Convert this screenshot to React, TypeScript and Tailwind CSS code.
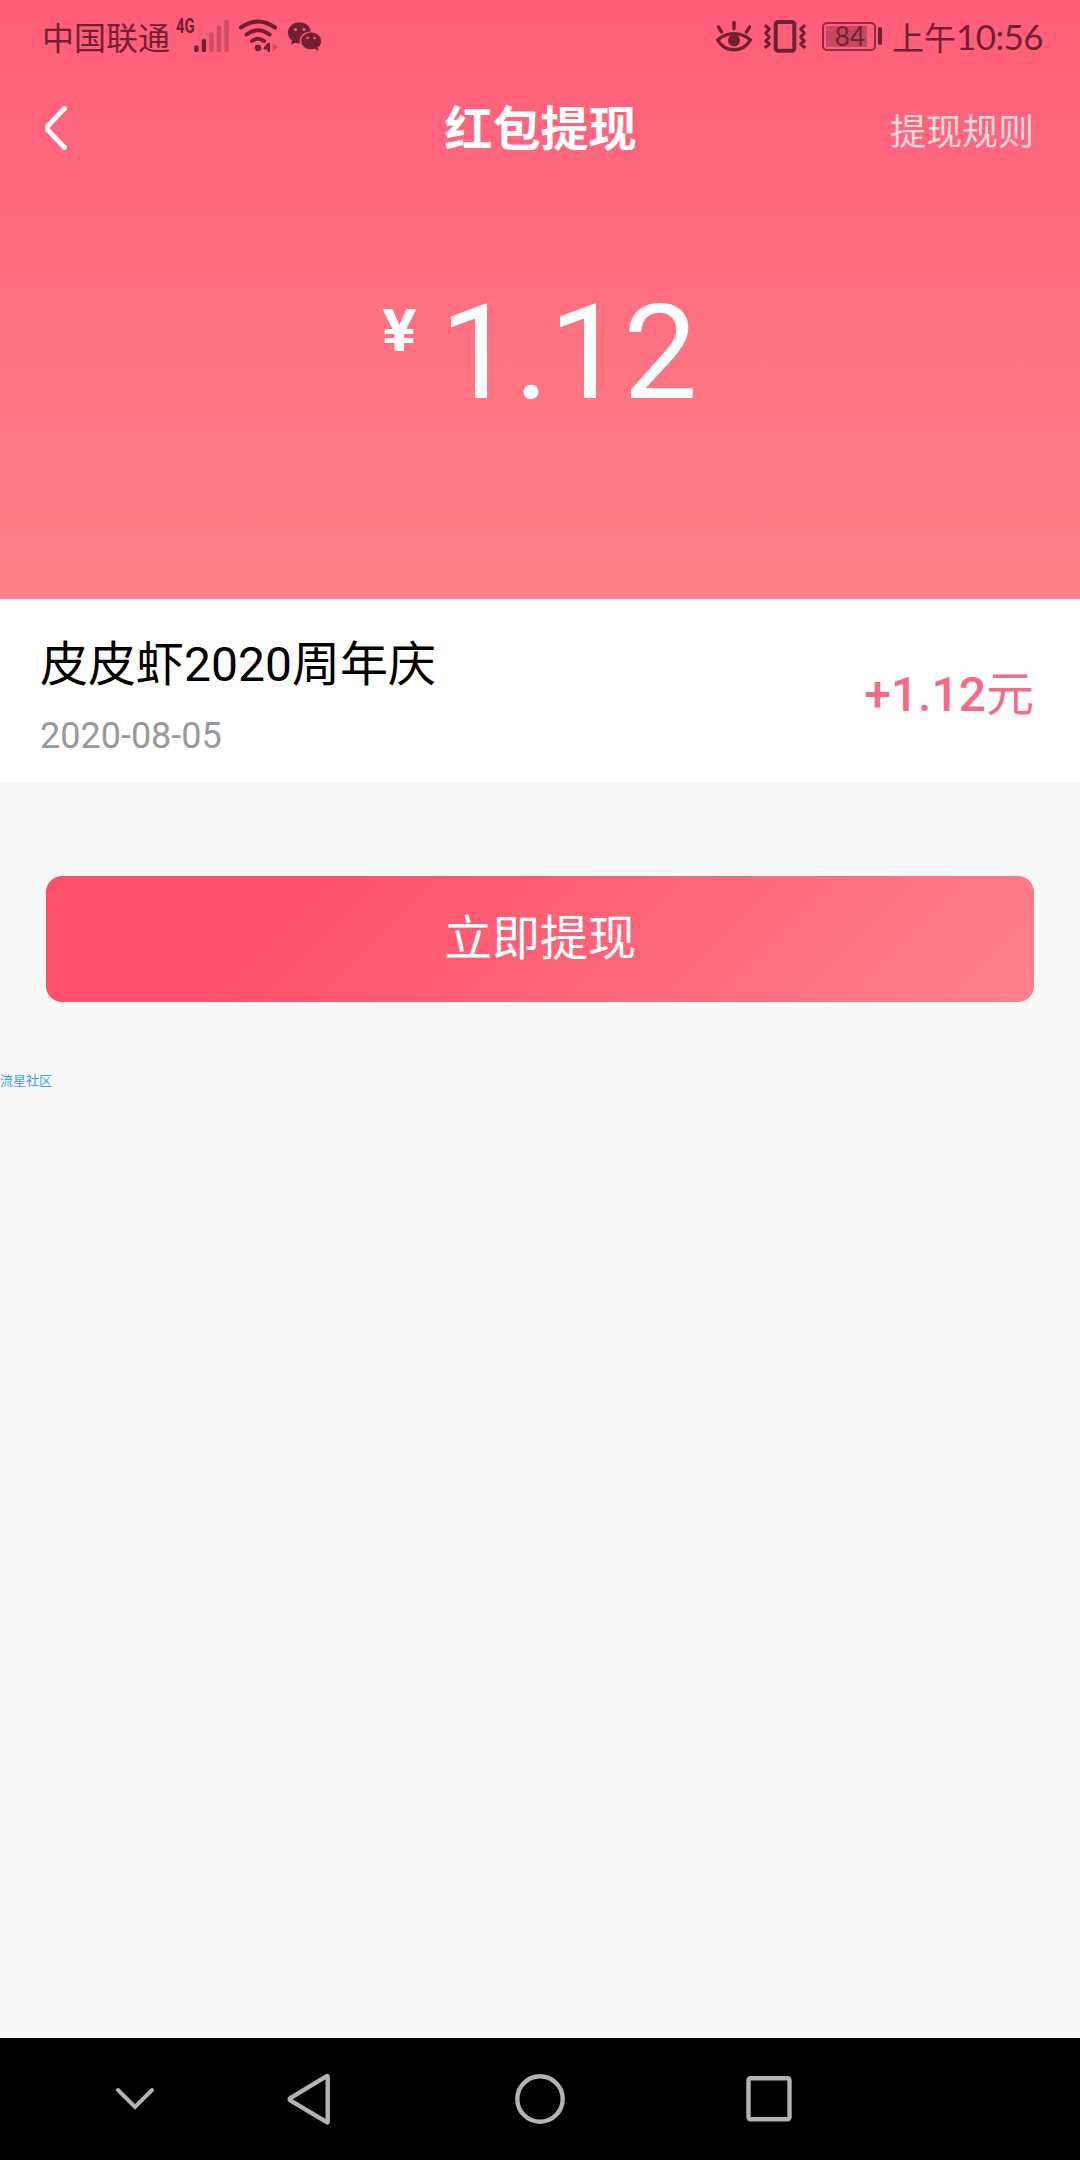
function SignalIcon() {
  return (
    <svg className="h-[34px] w-[36px] shrink-0" viewBox="194 19 36 34" stroke="#731f33" strokeWidth="4.4" strokeLinecap="round">
      <path d="M196.4 47.5v2.5M203.9 41v9" />
      <path d="M211.4 34.500v15.500M219 27.500v22.500M226.600 21.500v28.500" stroke="#d04a64" />
    </svg>
  );
}

function WifiIcon() {
  return (
    <svg className="h-[34px] w-[40px] shrink-0" viewBox="238 19 40 34" fill="none" stroke="#731f33" strokeWidth="4" strokeLinecap="round">
      <path d="M241 27.500Q258 15.500 275 27.500M246.500 34.500Q258 26 269.500 34.500M252 41Q258 36.500 264 41" />
      <circle cx="258" cy="48" r="3.300" fill="#731f33" stroke="none" />
      <path d="M270 43v9h-2.500v-2.500h-4v-1.500l4-5z" fill="#731f33" stroke="none" />
      <path d="M272.500 43.500l5.500 3.500-5.500 5z" fill="#d04a64" stroke="none" />
    </svg>
  );
}

function ChatIcon() {
  return (
    <svg className="h-[34px] w-[34px] shrink-0" viewBox="288 19 34 34" fill="#731f33">
      <path d="M299.500 22.300c-6.500 0-11.500 4.500-11.500 10.500 0 3.300 1.600 6 4 8l-1.200 4.200 4.500-2.300c1.500.5 3 .6 4.600.5-1.400-6.400 3.600-11.700 10.900-11.700-1-5.300-5.500-9.200-11.300-9.200z" />
      <path d="M311.200 32.600c-5.600 0-10 3.700-10 8.400s4.400 8.300 10 8.300c1.300 0 2.500-.2 3.600-.5l3.600 2.100-.8-3.400c2.300-1.600 3.600-3.900 3.600-6.500 0-4.700-4.400-8.400-10-8.400z" />
      <g fill="#f85f79">
        <circle cx="295.500" cy="29.500" r="1.500" />
        <circle cx="304" cy="29.500" r="1.500" />
        <circle cx="307.500" cy="38" r="1.300" />
        <circle cx="314.500" cy="38" r="1.300" />
      </g>
    </svg>
  );
}

function EyeIcon() {
  return (
    <svg className="h-[34px] w-[37px] shrink-0" viewBox="715 19 37 34" fill="none" stroke="#731f33" strokeWidth="3.4" strokeLinecap="round">
      <path d="M717.700 40C727 31.500 741 31.500 750.300 40C743 53 725 53 717.700 40Z" strokeLinejoin="round" />
      <circle cx="734" cy="40.500" r="6" fill="#731f33" stroke="none" />
      <path d="M734 22.500v6M718.500 27l3 5M749.500 27l-3 5" />
    </svg>
  );
}

function VibrateIcon() {
  return (
    <svg className="h-[34px] w-[44px] shrink-0" viewBox="763 19 44 34" fill="none" stroke="#731f33" strokeWidth="4" strokeLinecap="round" strokeLinejoin="round">
      <rect x="775.700" y="22" width="18.600" height="28.800" rx="2.500" />
      <path d="M765.800 26l3.400 3-3.400 4 3.400 4-3.400 4 3.400 3-3.400 3M804.200 26l-3.400 3 3.400 4-3.400 4 3.400 4-3.400 3 3.400 3" strokeWidth="3.2" />
    </svg>
  );
}

function Battery() {
  return (
    <div className="flex items-center">
      <div className="h-[29px] w-[54px] rounded-[5px] border-2 border-[#8f2b42] p-[2px]">
        <div className="flex h-full w-[41px] items-center justify-end bg-[#c4485f] pr-[2px] font-[Lato,sans-serif] text-[26px] leading-none text-[#731f33]">84</div>
      </div>
      <div className="ml-[2px] h-[18px] w-[4px] rounded-full bg-[#731f33]" />
    </div>
  );
}

function StatusBar() {
  return (
    <div className="flex h-[72px] items-center justify-between pl-[42px] pr-[36px] text-[#731f33]">
      <div className="flex items-center">
        <span className="w-[128px] font-['Noto_Sans_CJK_SC',sans-serif] text-[32px] leading-[40px]">中国联通</span>
        <span className="mb-[20px] ml-[6px] w-[18px] origin-left scale-x-[0.7] font-[Roboto,sans-serif] text-[21px] leading-none font-bold">4G</span>
        <SignalIcon />
        <div className="ml-[8px] flex gap-[10px]">
          <WifiIcon />
          <ChatIcon />
        </div>
      </div>
      <div className="flex items-center">
        <EyeIcon />
        <div className="mr-[15px] ml-[11px] flex"><VibrateIcon /></div>
        <Battery />
        <span className="ml-[10px] font-['Noto_Sans_CJK_SC',sans-serif] text-[32px] leading-[40px]">上午</span>
        <span className="w-[88px] font-[Lato,sans-serif] text-[35px] leading-[40px] tracking-[-0.6px]">10:56</span>
      </div>
    </div>
  );
}

function NavBar() {
  return (
    <nav className="flex h-[122px] items-center bg-black pl-[114px] text-[#b3b3b3]">
      <svg className="h-[52px] w-[42px]" viewBox="114 2073 42 52" fill="none" stroke="currentColor" strokeWidth="4" strokeLinecap="round">
        <path d="M118 2090l17 17 17-17" />
      </svg>
      <svg className="ml-[130px] h-[52px] w-[46px]" viewBox="286 2073 46 52" fill="none" stroke="currentColor" strokeWidth="4.400" strokeLinejoin="round">
        <path d="M327.700 2076.600v45.200q0 1-1 .4l-36-21.600q-2.200-1.400 0-2.800l36-21.600q1-.6 1 .4z" />
      </svg>
      <svg className="ml-[182px] h-[52px] w-[52px]" viewBox="514 2073 52 52" fill="none" stroke="currentColor" strokeWidth="4.400">
        <circle cx="540" cy="2099" r="22.700" />
      </svg>
      <svg className="ml-[179px] h-[52px] w-[48px]" viewBox="745 2073 48 52" fill="none" stroke="currentColor" strokeWidth="4.400">
        <rect x="748.500" y="2078.300" width="41" height="41" rx="2" />
      </svg>
    </nav>
  );
}

export default function App() {
  return (
    <div className="flex h-[2160px] w-[1080px] flex-col overflow-hidden bg-[#f8f8f8] font-[Roboto,'Noto_Sans_CJK_SC',sans-serif]">
      <section className="h-[599px] bg-linear-to-b from-[#ff5d79] to-[#ff8089] text-white">
        <StatusBar />
        <header className="grid h-[112px] grid-cols-3 items-center pr-[46px] pl-[46px]">
          <svg className="-ml-[4px] h-[46px] w-[26px]" viewBox="42 104 26 46" fill="none" stroke="currentColor" strokeWidth="4.800" strokeLinecap="round">
            <path d="M64.500 107.500L48.300 124.500Q46.500 127 48.300 129.500L64.500 146.500" />
          </svg>
          <h1 className="pt-[3px] pl-[1px] text-center text-[48px] leading-none font-bold">红包提现</h1>
          <a className="pt-[10px] text-right text-[36px] leading-none text-[#ffd8de]">提现规则</a>
        </header>
        <div className="flex items-start pt-[91px] pl-[382px]">
          <span className="mt-[26px] w-[58px] origin-left scale-x-[1.08] text-[60px] leading-none font-bold">¥</span>
          <span className="text-[132px] leading-[156px]">1.12</span>
        </div>
      </section>

      <section className="flex h-[184px] items-center justify-between bg-white pr-[46px] pl-[40px]">
        <div className="pt-[19px]">
          <div className="text-[48px] leading-[70px] text-black">皮皮虾2020周年庆</div>
          <div className="text-[36px] leading-[72px] text-[#999]">2020-08-05</div>
        </div>
        <div className="pt-[7px] text-[48px] leading-[70px] text-[#f26c88]">
          <span className="font-medium">+1.12</span>元
        </div>
      </section>

      <main className="flex-1 pt-[93px]">
        <button className="mx-[46px] flex h-[126px] w-[988px] items-center justify-center rounded-[16px] bg-linear-[135deg,#ff506b_24%,#ff818b] text-[48px] text-white">
          立即提现
        </button>
        <div className="mt-[70px] font-['Noto_Sans_CJK_SC',sans-serif] text-[13px] leading-[16px] text-[#3d9cf3]">流星社区</div>
      </main>
      <NavBar />
    </div>
  );
}
